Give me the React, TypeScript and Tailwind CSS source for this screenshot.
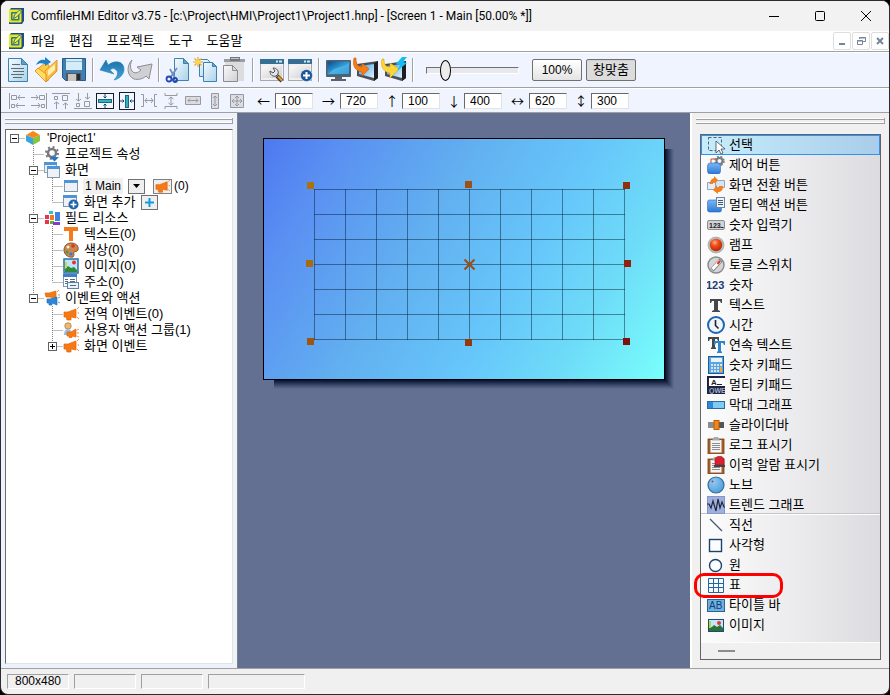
import type { ReactNode } from "react";

type IconProps = { size?: number; box?: number; children: ReactNode };

function Icon({ size = 18, box = 18, children }: IconProps) {
    return (
        <svg width={size} height={size} viewBox={`0 0 ${box} ${box}`} fill="none" className="shrink-0" aria-hidden="true">
            {children}
        </svg>
    );
}

function Gradients() {
    return (
        <svg width="0" height="0" className="absolute" aria-hidden="true">
            <defs>
                <linearGradient id="paper" x1="0" y1="0" x2="1" y2="1">
                    <stop offset="0" stopColor="#f4faff" />
                    <stop offset="1" stopColor="#a9d2ea" />
                </linearGradient>
                <linearGradient id="greyPaper" x1="0" y1="0" x2="1" y2="1">
                    <stop offset="0" stopColor="#fafafa" />
                    <stop offset="1" stopColor="#cfcfd2" />
                </linearGradient>
                <linearGradient id="blue" x1="0" y1="0" x2="0" y2="1">
                    <stop offset="0" stopColor="#7ab8f5" />
                    <stop offset="1" stopColor="#2b78d8" />
                </linearGradient>
                <linearGradient id="sky" x1="0" y1="0" x2="1" y2="1">
                    <stop offset="0" stopColor="#0c4a86" />
                    <stop offset="0.5" stopColor="#2f9ad8" />
                    <stop offset="1" stopColor="#0d5ea6" />
                </linearGradient>
                <linearGradient id="undo" x1="0" y1="0" x2="0" y2="1">
                    <stop offset="0" stopColor="#1c6fa8" />
                    <stop offset="1" stopColor="#41a6dc" />
                </linearGradient>
                <linearGradient id="gold" x1="0" y1="0" x2="1" y2="1">
                    <stop offset="0" stopColor="#ffe27a" />
                    <stop offset="1" stopColor="#f39a10" />
                </linearGradient>
                <linearGradient id="glass" x1="0" y1="0" x2="1" y2="1">
                    <stop offset="0" stopColor="#3c9be0" />
                    <stop offset="1" stopColor="#e4f4fd" />
                </linearGradient>
                <radialGradient id="red" cx="0.4" cy="0.3" r="0.7">
                    <stop offset="0" stopColor="#ffb080" />
                    <stop offset="0.4" stopColor="#f0501c" />
                    <stop offset="1" stopColor="#b82800" />
                </radialGradient>
                <radialGradient id="knob" cx="0.35" cy="0.3" r="0.8">
                    <stop offset="0" stopColor="#8cccf8" />
                    <stop offset="1" stopColor="#4e98d4" />
                </radialGradient>
            </defs>
        </svg>
    );
}

function AppLogo() {
    return (
        <Icon size={16} box={16}>
            <path d="M3 0h13v13l-2 3H1V3z" fill="#1d4f86" />
            <rect x="1" y="1.500" width="12.500" height="13" rx="1" fill="#e8e820" />
            <rect x="3" y="4" width="8.500" height="8.500" rx="1" fill="#2f7890" />
            <rect x="4.500" y="5.500" width="5.500" height="5.500" fill="#e8e820" />
            <path d="M5.500 10.500l1-3.500 5-5 2 2-5 5z" fill="#f6f040" stroke="#27638f" strokeWidth="0.900" />
        </Icon>
    );
}

/* Main toolbar drawings, 26 x 26 */

const windowFrame = (
    <>
        <rect x="1.500" y="3.500" width="23" height="20" fill="#f0f0f0" stroke="#a9a9a9" />
        <rect x="1" y="2" width="24" height="5" fill="#366f93" />
        <path d="M17 4.500h2M20 4.500h3" stroke="#cfe6f4" strokeWidth="2" />
        <path d="M3 9h20v12H3z" fill="url(#greyPaper)" />
    </>
);

const panelFrame = (
    <>
        <path d="M4 7l21-3v17l-4 3-17-5z" fill="#4a5058" />
        <path d="M6 9l15-2v14L6 17z" fill="url(#glass)" />
        <path d="M21 6l4-2v17l-4 3z" fill="#1c2024" />
    </>
);

const toolGroups: { label: string; art: ReactNode }[][] = [
    [
        {
            label: "새로 만들기",
            art: (
                <>
                    <path d="M3.500 1.500h13l6 6v17h-19z" fill="url(#paper)" stroke="#3f82ab" />
                    <path d="M16.500 1.500v6h6z" fill="#5f9fc8" stroke="#3f82ab" />
                    <path d="M7 7.500h8M6 11.500h13M8 14.500h11M6 17.500h13M8 20.500h9" stroke="#5f6a72" />
                </>
            ),
        },
        {
            label: "열기",
            art: (
                <>
                    <path d="M2 14l10-8 4 2-1 16z" fill="#ffc847" stroke="#e08a0a" strokeWidth="0.800" />
                    <path d="M12 14L24 3v11L13 25z" fill="url(#gold)" stroke="#e08a0a" strokeWidth="0.800" />
                    <path d="M2 14l11 11v-8L5 11z" fill="#ffdc68" stroke="#e08a0a" strokeWidth="0.800" />
                    <path d="M15 13l7-6v6l-7 6z" fill="#fff0b0" />
                    <path d="M3 8c2-5 6-6 9-5V0l6 5-6 4V7c-3-1-6-1-9 1z" fill="#1f82c4" />
                </>
            ),
        },
        {
            label: "저장",
            art: (
                <>
                    <path d="M1.500 1.500h23v22h-20l-3-3z" fill="#417fae" stroke="#285b84" />
                    <rect x="5" y="2" width="16" height="11" fill="#d5ecf9" />
                    <path d="M5 4.500h16" stroke="#8fc0df" />
                    <rect x="5" y="16" width="15" height="8" fill="#54585e" />
                    <rect x="7" y="17" width="8" height="7" fill="#c9c4c0" />
                    <rect x="16" y="17" width="3" height="6" fill="#26292e" />
                </>
            ),
        },
    ],
    [
        {
            label: "실행 취소",
            art: <path d="M1 13L7 3l2 5c8-6 16-3 16 4 0 6-5 10-10 11 4-4 5-9 1-11-2-1-4 0-5 1l4 4z" fill="url(#undo)" stroke="#2a7db2" strokeWidth="0.600" />,
        },
        {
            label: "다시 실행",
            art: <path d="M5 3C-1 9 0 19 7 22c4 1 9 0 12-3l3 3 3-15-15 3 4 3c-3 3-7 4-9 1-2-3-2-7 0-11z" fill="#cfd0d3" stroke="#8c8d91" strokeWidth="1" />,
        },
    ],
    [
        {
            label: "잘라내기",
            art: (
                <>
                    <path d="M9.500 1.500h9l5 5v17h-14z" fill="url(#paper)" stroke="#3f82ab" />
                    <path d="M18.500 1.500v5h5z" fill="#5f9fc8" stroke="#3f82ab" />
                    <path d="M5 12l5 9M12 11L5 21" stroke="#6f8fc0" strokeWidth="1.800" />
                    <circle cx="4" cy="22" r="2.500" stroke="#2447b4" strokeWidth="1.800" />
                    <circle cx="10" cy="23" r="2" stroke="#2447b4" strokeWidth="1.800" />
                </>
            ),
        },
        {
            label: "복사",
            art: (
                <>
                    <path d="M6.500 2.500h8l4 4v13h-12z" fill="url(#paper)" stroke="#3f82ab" />
                    <path d="M10.500 5.500h9l4 4v15h-13z" fill="url(#paper)" stroke="#3f82ab" />
                    <path d="M19.500 5.500v4h4z" fill="#5f9fc8" stroke="#3f82ab" />
                    <path d="M5 0v10M0 5h10M1.500 1.500l7 7M8.500 1.500l-7 7" stroke="#e8a81c" strokeWidth="1.200" />
                    <circle cx="5" cy="5" r="2.200" fill="#ffd84a" />
                </>
            ),
        },
        {
            label: "붙여넣기",
            art: (
                <>
                    <path d="M4 2h19v22H4z" fill="#dcdcdf" />
                    <path d="M3 2h21v3H3z" fill="#9b9da0" />
                    <path d="M9 0h10v4H9z" fill="#75777a" />
                    <path d="M10 1.500h8" stroke="#c4c5c7" />
                    <path d="M2.500 8.500h9l5 5v11h-14z" fill="url(#greyPaper)" stroke="#8b8c8f" />
                    <path d="M11.500 8.500v5h5z" fill="#dadada" stroke="#8b8c8f" />
                </>
            ),
        },
    ],
    [
        {
            label: "화면 설정",
            art: (
                <>
                    {windowFrame}
                    <path d="M18 19l5 5" stroke="#4a3a2a" strokeWidth="4" />
                    <path d="M19 19.500l4 4" stroke="#e59a2c" strokeWidth="2.200" />
                    <path d="M11 14c0 4 3 6 6 5l2-2c1-3-1-6-5-6l2 3-2 2z" fill="#e5e5ea" stroke="#50525c" />
                </>
            ),
        },
        {
            label: "화면 추가",
            art: (
                <>
                    {windowFrame}
                    <circle cx="19.500" cy="18.500" r="6" fill="#1a5796" stroke="#fff" strokeWidth="0.500" />
                    <path d="M19.500 15v7M16 18.500h7" stroke="#fff" strokeWidth="2" />
                </>
            ),
        },
    ],
    [
        {
            label: "시뮬레이션",
            art: (
                <>
                    <rect x="1" y="3" width="25" height="17" rx="1" fill="#51606c" />
                    <rect x="2.500" y="4.500" width="22" height="13" fill="url(#sky)" />
                    <path d="M4 17c4-7 10-5 20-11v11z" fill="#5cc4ee" opacity="0.600" />
                    <path d="M10 20h7v2h4v2H6v-2h4z" fill="#5a646c" />
                </>
            ),
        },
        {
            label: "다운로드",
            art: (
                <>
                    {panelFrame}
                    <path d="M1 1c-2 9 2 13 8 14v4l7-7-7-6v4C5 10 3 7 3 1z" fill="#f57d14" stroke="#c85c04" strokeWidth="0.600" />
                </>
            ),
        },
        {
            label: "빠른 다운로드",
            art: (
                <>
                    {panelFrame}
                    <path d="M1 2c-2 8 2 13 8 14v5l9-9-9-6v4C5 10 3 8 3 2z" fill="#ffd638" stroke="#dba712" strokeWidth="0.600" />
                    <path d="M21 0l-6 7 4 1-3 6 10-8-4-1 4-5z" fill="#12bff0" />
                </>
            ),
        },
    ],
];

/* Alignment toolbar drawings, 18 x 18 */

const alignTools: { label: string; art: ReactNode }[] = [
    {
        label: "왼쪽 맞춤",
        art: <path d="M1.500 1v16M3.500 3.500h5v4h-5zM17 5.500h-7M12 3l-2 2.500L12 8M17 13.500H8M10 11l-2 2.500 2 2.500M3.500 12.500h3v3h-3z" />,
    },
    {
        label: "오른쪽 맞춤",
        art: <path d="M16.500 1v16M9.500 3.500h5v4h-5zM1 5.500h7M6 3l2 2.500L6 8M1 13.500h9M8 11l2 2.500L8 16M11.500 12.500h3v3h-3z" />,
    },
    {
        label: "위쪽 맞춤",
        art: <path d="M0 1.500h18M2.500 4.500h3v3h-3zM10.500 3.500h5v5h-5zM4.500 17v-7M2 12l2.500-2L7 12M13.500 17v-6M11 13l2.500-2 2.500 2" />,
    },
    {
        label: "아래쪽 맞춤",
        art: <path d="M0 16.500h18M2.500 11.500h3v3h-3zM10.500 9.500h5v5h-5zM4.500 1v8M2 7l2.500 2L7 7M13.500 1v6M11 5l2.500 2L16 5" />,
    },
    {
        label: "세로 가운데",
        art: (
            <>
                <rect x="0.500" y="1.500" width="17" height="15" fill="#f4f7ff" stroke="#181c28" />
                <rect x="2.500" y="7.500" width="13" height="3" fill="#35b2bd" stroke="#176b80" />
                <path d="M9 2v4M9 16v-4M7.500 4.500L9 6l1.500-1.500M7.500 13.500L9 12l1.500 1.500" stroke="#16457c" />
            </>
        ),
    },
    {
        label: "가로 가운데",
        art: (
            <>
                <rect x="1.500" y="0.500" width="15" height="17" fill="#f4f7ff" stroke="#181c28" />
                <rect x="7.500" y="3.500" width="3" height="12" fill="#35b2bd" stroke="#176b80" />
                <path d="M2 9h4M16 9h-4M4.500 7.500L6 9l-1.500 1.500M13.500 7.500L12 9l1.500 1.500" stroke="#16457c" />
            </>
        ),
    },
    {
        label: "가로 간격",
        art: <path d="M1 2.500h2.500v12H1M17 2.500h-2.500v12H17M5 8.500h8M7 6L5 8.500 7 11M11 6l2 2.500-2 2.500" />,
    },
    {
        label: "세로 간격",
        art: <path d="M3 1v2.500h12V1M3 17v-2.500h12V17M9 5v8M6.500 7L9 5l2.500 2M6.500 11L9 13l2.500-2" />,
    },
    {
        label: "너비 맞춤",
        art: <path d="M1.500 4.500h15v8h-15zM4 8.500h10M6 6.500l-2 2 2 2M12 6.500l2 2-2 2" fill="#dcdde2" />,
    },
    {
        label: "높이 맞춤",
        art: <path d="M5.500 1.500h7v15h-7zM9 4v10M7 6l2-2 2 2M7 12l2 2 2-2" fill="#dcdde2" />,
    },
    {
        label: "크기 맞춤",
        art: <path d="M2.500 2.500h13v13h-13zM4 9h10M9 4v10M6 7L4 9l2 2M12 7l2 2-2 2M7 6l2-2 2 2M7 12l2 2 2-2" fill="#dcdde2" />,
    },
];

const coords = [
    { arrow: "←", label: "왼쪽", value: "100", wide: true },
    { arrow: "→", label: "오른쪽", value: "720", wide: true },
    { arrow: "↑", label: "위", value: "100", wide: false },
    { arrow: "↓", label: "아래", value: "400", wide: false },
    { arrow: "↔", label: "너비", value: "620", wide: true },
    { arrow: "↕", label: "높이", value: "300", wide: false },
];

/* Project tree */

const horn = <path d="M1 6l4 0 8-3v9l-5-1v3H4l-1-3H1zM14 3l2-2M14.500 7H16M14 11l2 2" fill="#f47a16" stroke="#e8640a" strokeWidth="0.700" />;

const treeArt: Record<string, ReactNode> = {
    cube: (
        <>
            <path d="M1 5l7 3v7l-7-4z" fill="#35a6e4" />
            <path d="M15 5L8 8v7l7-4z" fill="#8ac43c" />
            <path d="M8 1l7 4-7 3-7-3z" fill="#f48a1e" />
        </>
    ),
    gear: (
        <>
            <circle cx="8" cy="7" r="4" stroke="#77797d" strokeWidth="2.500" />
            <circle cx="8" cy="7" r="6" stroke="#77797d" strokeWidth="2" strokeDasharray="2 2.700" />
            <path d="M6 11h9l-4.500 4.500z" fill="#1f78d0" />
        </>
    ),
    windows: (
        <>
            <rect x="0.500" y="0.500" width="12" height="10" fill="#e8eef6" stroke="#8ea6c0" />
            <path d="M0 0h13v3H0z" fill="#4f93d8" />
            <rect x="3.500" y="4.500" width="12" height="11" fill="#eef2f8" stroke="#8094aa" />
            <path d="M3 4h13v3H3z" fill="#4f93d8" />
        </>
    ),
    window: (
        <>
            <rect x="1.500" y="2.500" width="13" height="11" fill="#eef2f8" stroke="#8094aa" />
            <path d="M1 2h14v3H1z" fill="#4f93d8" />
        </>
    ),
    windowAdd: (
        <>
            <rect x="0.500" y="1.500" width="13" height="11" fill="#eef2f8" stroke="#8094aa" />
            <path d="M0 1h14v3H0z" fill="#4f93d8" />
            <circle cx="10.500" cy="10.500" r="5" fill="#1f64a8" />
            <path d="M10.500 7.500v6M7.500 10.500h6" stroke="#fff" strokeWidth="1.600" />
        </>
    ),
    blocks: (
        <>
            <path d="M1 5h4v4H1z" fill="#e8344c" />
            <path d="M1 10h4v4H1z" fill="#e8344c" />
            <path d="M5 1h4v3H5z" fill="#2fc0d8" />
            <path d="M6 5h4v5H6z" fill="#f07828" />
            <path d="M11 2h5v9h-5z" fill="#3a86e0" />
            <path d="M6 11h4v3H6z" fill="#58b838" />
            <path d="M9 12h7v3H9z" fill="#8a3cc0" />
        </>
    ),
    letter: <path d="M1 1h14v4h-5v10H6V5H1z" fill="#f47a1c" />,
    palette: (
        <>
            <path d="M8 1c5 0 8 3 7 7-1 2-3 1-4 2s1 3-1 5c-4 1-9-2-9-7 0-4 3-7 7-7z" fill="#c88750" stroke="#8c5426" />
            <circle cx="5" cy="5" r="1.500" fill="#fff0d0" />
            <circle cx="10" cy="4" r="1.800" fill="#e03020" />
            <circle cx="4" cy="10" r="1.500" fill="#38a040" />
            <circle cx="8" cy="12" r="1.600" fill="#3078d8" />
        </>
    ),
    picture: (
        <>
            <rect x="1" y="1" width="14" height="14" fill="#bfe4fb" stroke="#2e6fa6" strokeWidth="1.500" />
            <path d="M2 14v-3l3-3 3 2 3-1 3 3v2z" fill="#2f8a38" />
            <path d="M2 4h2v6H2z" fill="#c4dc48" />
            <circle cx="11" cy="4.500" r="2" fill="#e83030" />
        </>
    ),
    address: (
        <>
            <rect x="0.500" y="0.500" width="13" height="12" fill="#fff" stroke="#7c98bc" />
            <path d="M0 0h14v3H0z" fill="#3f7fc8" />
            <path d="M2 5.500h3M7 5.500h5M2 7.500h3M7 7.500h5M2 9.500h3" stroke="#5a6a80" />
            <rect x="4.500" y="8.500" width="11" height="6" fill="#e8f0f8" stroke="#6080a8" />
            <path d="M7 11.500h6" stroke="#5a6a80" />
        </>
    ),
    horns: (
        <>
            <path d="M1 3l4 0 7-2v7l-7-1H2zM13 2l2-2M14 5h2" fill="#f47a16" stroke="#e8640a" strokeWidth="0.700" />
            <path d="M3 9l3 0 7-2v8l-5-2v2H5v-2H3zM14 8l2-1M14 12l2 1" fill="#2f86d4" stroke="#2272bc" strokeWidth="0.700" />
        </>
    ),
    horn,
    user: (
        <>
            <circle cx="5" cy="4" r="3.200" fill="#f0b878" stroke="#b07a40" strokeWidth="0.800" />
            <path d="M1 13c0-4 2-6 4-6s4 2 4 6z" fill="#8cc0ec" />
            <path d="M4 10l4 0 5-3v8l-4-1v1.500H6V14H4zM14 8l2-1M14 11h2M14 14l2 1" fill="#f47a16" stroke="#e8640a" strokeWidth="0.700" />
        </>
    ),
};

type Branch = "line" | "tee" | "end" | "blank" | "open" | "openEnd" | "openRoot" | "closedEnd";

const treeRows: { branches: Branch[]; art: string; text: string; extra?: "main" | "add" }[] = [
    { branches: ["openRoot"], art: "cube", text: "'Project1'" },
    { branches: ["blank", "tee"], art: "gear", text: "프로젝트 속성" },
    { branches: ["blank", "open"], art: "windows", text: "화면" },
    { branches: ["blank", "line", "tee"], art: "window", text: "1 Main", extra: "main" },
    { branches: ["blank", "line", "end"], art: "windowAdd", text: "화면 추가", extra: "add" },
    { branches: ["blank", "open"], art: "blocks", text: "필드 리소스" },
    { branches: ["blank", "line", "tee"], art: "letter", text: "텍스트(0)" },
    { branches: ["blank", "line", "tee"], art: "palette", text: "색상(0)" },
    { branches: ["blank", "line", "tee"], art: "picture", text: "이미지(0)" },
    { branches: ["blank", "line", "end"], art: "address", text: "주소(0)" },
    { branches: ["blank", "openEnd"], art: "horns", text: "이벤트와 액션" },
    { branches: ["blank", "blank", "tee"], art: "horn", text: "전역 이벤트(0)" },
    { branches: ["blank", "blank", "tee"], art: "user", text: "사용자 액션 그룹(1)" },
    { branches: ["blank", "blank", "closedEnd"], art: "horn", text: "화면 이벤트" },
];

function BranchCell({ kind }: { kind: Branch }) {
    const down = kind === "line" || kind === "tee" || kind === "open";
    const up = down || kind === "end" || kind === "openEnd" || kind === "closedEnd";
    const across = kind !== "line" && kind !== "blank";
    const toggle = kind.startsWith("open") || kind === "closedEnd";
    return (
        <svg width="19" height="16" viewBox="0 0 19 16" fill="none" className="shrink-0" aria-hidden="true">
            <g stroke="#808080" strokeDasharray="1 1">
                {up && <path d="M8.500 0v8" />}
                {down && <path d="M8.500 8v8" />}
                {across && <path d="M8.500 8.500H19" />}
            </g>
            {toggle && (
                <>
                    <rect x="4.500" y="4.500" width="8" height="8" fill="#fff" stroke="#606060" />
                    <path d={kind === "closedEnd" ? "M6 8.500h5M8.500 6v5" : "M6 8.500h5"} stroke="#000" />
                </>
            )}
        </svg>
    );
}

function ProjectTree() {
    return (
        <ul className="min-h-0 flex-1 overflow-hidden border border-[#e3e3e3] border-t-[#696969] border-l-[#696969] bg-white">
            {treeRows.map((row) => (
                <li key={row.text} className="flex h-4 items-center">
                    {row.branches.map((kind, index) => (
                        <BranchCell key={index} kind={kind} />
                    ))}
                    <Icon size={16} box={16}>{treeArt[row.art]}</Icon>
                    <span
                        className={
                            row.extra === "main"
                                ? "ml-1 bg-[#f0f0f0] px-[2px] text-xs leading-4"
                                : row.branches[0] === "openRoot"
                                    ? "ml-[6px] text-xs leading-4"
                                    : "ml-[5px] leading-4"
                        }
                    >
                        {row.text}
                    </span>
                    {row.extra === "main" && (
                        <>
                            <button aria-label="화면 메뉴" className="ml-[5px] flex h-[15px] w-[17px] items-center justify-center border border-[#707070] bg-[#efefef]">
                                <svg width="7" height="4" viewBox="0 0 7 4" aria-hidden="true"><path d="M0 0h7L3.500 4z" fill="#000" /></svg>
                            </button>
                            <button aria-label="화면 이벤트" className="mr-[2px] ml-2 flex h-[15px] w-[19px] items-center justify-center border border-[#808080] bg-[#efefef]">
                                <Icon size={15} box={16}>{horn}</Icon>
                            </button>
                            <span className="text-xs">(0)</span>
                        </>
                    )}
                    {row.extra === "add" && (
                        <button aria-label="추가" className="ml-[6px] flex h-[15px] w-[17px] items-center justify-center border border-[#707070] bg-[#efefef]">
                            <svg width="9" height="9" viewBox="0 0 9 9" aria-hidden="true"><path d="M4.500 0v9M0 4.500h9" stroke="#109ae0" strokeWidth="2" /></svg>
                        </button>
                    )}
                </li>
            ))}
        </ul>
    );
}

/* Object palette */

const clipboard = (
    <>
        <rect x="1" y="3" width="16" height="15" fill="#a45f2c" stroke="#70401c" strokeWidth="0.800" />
        <rect x="3.500" y="4" width="11" height="12.500" fill="#f4f4f4" />
        <path d="M5 7.500h8M5 9.500h8M5 11.500h8M5 13.500h8" stroke="#8a8d92" />
        <path d="M5 4.500h8L11 1H7z" fill="#a8abae" />
    </>
);

const glyph = "font-['Liberation_Sans',sans-serif] font-bold";

const objects: { text: string; art: ReactNode }[] = [
    {
        text: "선택",
        art: (
            <>
                <rect x="1.500" y="1.500" width="13" height="13" stroke="#54606c" strokeDasharray="3 2" />
                <path d="M9 5v12l3-3 2 4 2-1-2-4h4z" fill="#fff" stroke="#404850" strokeWidth="0.800" />
            </>
        ),
    },
    {
        text: "제어 버튼",
        art: (
            <>
                <path d="M4 7V3h5" stroke="#e83828" />
                <circle cx="12.500" cy="5" r="3" stroke="#777a80" strokeWidth="2" />
                <circle cx="12.500" cy="5" r="4.500" stroke="#777a80" strokeWidth="1.400" strokeDasharray="2 1.600" />
                <rect x="0.500" y="7" width="13" height="11" rx="3" fill="url(#blue)" stroke="#2a6ab8" strokeWidth="0.600" />
            </>
        ),
    },
    {
        text: "화면 전환 버튼",
        art: (
            <>
                <path d="M0.500 6.500h9v7h-9z" fill="#e8eef4" stroke="#8ea6bc" />
                <path d="M8.500 4.500h9v7h-9z" fill="#d4e4f2" stroke="#8ea6bc" />
                <path d="M3 7c0-3 2-4 4-5V0l4 4-3 4V6C6 6 6 7 6 8H2z" fill="#f4801c" />
                <path d="M16 11c0 3-2 5-5 5v2l-5-4 4-5v3c2 0 2-1 2-2h4z" fill="#f4801c" />
            </>
        ),
    },
    {
        text: "멀티 액션 버튼",
        art: (
            <>
                <rect x="0.500" y="4" width="14" height="12" rx="2" fill="url(#blue)" stroke="#2a6ab8" strokeWidth="0.600" />
                <rect x="9.500" y="1.500" width="8" height="10" fill="#eef4fa" stroke="#6a86a4" />
                <path d="M11 4.500h5M11 6.500h5M11 8.500h5" stroke="#405870" />
            </>
        ),
    },
    {
        text: "숫자 입력기",
        art: (
            <>
                <rect x="0.500" y="4.500" width="17" height="9" rx="1.500" fill="#d0d2d4" stroke="#8b8d90" />
                <text x="2" y="12" fontSize="7" fill="#222" className={glyph}>123</text>
                <path d="M13.500 11.500h3" stroke="#222" />
            </>
        ),
    },
    {
        text: "램프",
        art: (
            <>
                <circle cx="9" cy="9" r="8" fill="#b8babc" stroke="#9a9c9e" strokeWidth="0.600" />
                <circle cx="9" cy="9" r="6.200" fill="url(#red)" />
            </>
        ),
    },
    {
        text: "토글 스위치",
        art: (
            <>
                <circle cx="9" cy="9" r="8" fill="#d4d5d6" stroke="#8a8c8e" strokeWidth="1.500" />
                <path d="M5 14L14 4" stroke="#8a8c8e" strokeWidth="4.500" />
                <path d="M5.500 13L13 5" stroke="#fff" strokeWidth="3" />
                <path d="M10.500 8L13 5" stroke="#e03020" strokeWidth="2" />
            </>
        ),
    },
    { text: "숫자", art: <text x="-1" y="13" fontSize="11" fill="#223c72" className={glyph}>123</text> },
    { text: "텍스트", art: <path d="M3 3h12v4h-1l-1-2h-2v9l2 1v1H5v-1l2-1V5H5L4 7H3z" fill="#454748" /> },
    {
        text: "시간",
        art: (
            <>
                <circle cx="9" cy="9" r="8" fill="#eef4fa" stroke="#1c66b4" strokeWidth="2" />
                <path d="M8.500 4v5.500l3 3" stroke="#222" strokeWidth="1.600" />
            </>
        ),
    },
    {
        text: "연속 텍스트",
        art: (
            <>
                <path d="M1 1h11v4h-1l-1-2H8v8l1 1v1H4v-1l1-1V3H3L2 5H1z" fill="#454748" />
                <path d="M7 5h11v4h-1l-1-2h-2v8l1 1v1h-5v-1l1-1V7H9L8 9H7z" fill="#2b86d0" />
            </>
        ),
    },
    {
        text: "숫자 키패드",
        art: (
            <>
                <rect x="1.500" y="0.500" width="15" height="17" fill="#5ba6e0" stroke="#1e5c98" />
                <rect x="4" y="2" width="11" height="4" fill="#e8f4fc" />
                <path d="M4 9h2m1 0h2m1 0h2M4 12h2m1 0h2m1 0h2M4 15h2m1 0h2m1 0h2" stroke="#d4e4f0" strokeWidth="2" />
                <path d="M13 11h2v5h-2z" fill="#f4a838" />
                <path d="M13 8h2v2h-2z" fill="#d4e4f0" />
            </>
        ),
    },
    {
        text: "멀티 키패드",
        art: (
            <>
                <rect x="0" y="0" width="18" height="18" fill="#1d2340" />
                <rect x="2" y="2" width="16" height="8" fill="#fff" />
                <text x="4" y="9" fontSize="8" fill="#222" className={glyph}>A</text>
                <path d="M10 8.500h5" stroke="#222" />
                <text x="2" y="17" fontSize="7" fill="#a8b0d0" className={glyph}>QWE</text>
            </>
        ),
    },
    {
        text: "막대 그래프",
        art: (
            <>
                <rect x="0.500" y="5.500" width="17" height="7" fill="#7ecbf4" stroke="#2a6b9c" />
                <path d="M1 6h5v6H1z" fill="#2f88dc" />
            </>
        ),
    },
    {
        text: "슬라이더바",
        art: (
            <>
                <path d="M1 6h15v6H1z" fill="#8a8e92" />
                <path d="M12 6h5v6h-5z" fill="#50565c" />
                <rect x="7" y="4.500" width="5" height="9" fill="#f48418" stroke="#b85c08" />
            </>
        ),
    },
    { text: "로그 표시기", art: clipboard },
    {
        text: "이력 알람 표시기",
        art: (
            <>
                {clipboard}
                <path d="M8 9V4c0-5 9-5 9 0v5z" fill="#dc2030" stroke="#98101c" strokeWidth="0.600" />
                <path d="M7 9h11v2H7z" fill="#40444a" />
            </>
        ),
    },
    {
        text: "노브",
        art: (
            <>
                <circle cx="9" cy="9" r="8" fill="url(#knob)" stroke="#356c9c" strokeWidth="1.200" />
                <circle cx="5.500" cy="5.500" r="1" fill="#c83030" />
            </>
        ),
    },
    {
        text: "트렌드 그래프",
        art: (
            <>
                <rect x="0.500" y="0.500" width="17" height="17" fill="#9fb0de" stroke="#8496c8" />
                <path d="M0 8h2l2 4 2-7 3 10 2-12 2 9 2-6 2 5h1" stroke="#20283c" strokeWidth="1.200" />
            </>
        ),
    },
];

const shapes: { text: string; marked?: boolean; art: ReactNode }[] = [
    { text: "직선", art: <path d="M3 3l12 12" stroke="#44586e" strokeWidth="1.300" /> },
    { text: "사각형", art: <rect x="2.500" y="3.500" width="12" height="12" fill="#fafcff" stroke="#1f416e" strokeWidth="1.400" /> },
    { text: "원", art: <circle cx="8.500" cy="9.500" r="6" fill="#fafcff" stroke="#1f416e" strokeWidth="1.400" /> },
    {
        text: "표",
        marked: true,
        art: <path d="M1.500 2.500h15v14h-15zM6.500 2.500v14M11.500 2.500v14M1.500 7.500h15M1.500 11.500h15" fill="#f4faff" stroke="#28649c" />,
    },
    {
        text: "타이틀 바",
        art: (
            <>
                <rect x="0.500" y="3.500" width="17" height="12" fill="#6fb0e4" stroke="#2c6498" />
                <text x="2" y="13" fontSize="10" fill="#143c6c" className="font-['Liberation_Sans',sans-serif]">AB</text>
            </>
        ),
    },
    {
        text: "이미지",
        art: (
            <>
                <rect x="1.500" y="3.500" width="15" height="12" fill="#c4e6fb" stroke="#1f4c7c" />
                <path d="M2 15v-3l3-1 2-2 3 2 3-2 3 3v3z" fill="#2c7434" />
                <path d="M2 5h2v7H2z" fill="#b8d838" />
                <circle cx="12" cy="7" r="2" fill="#e83838" />
            </>
        ),
    },
];

function PaletteButton({ text, art, active, marked }: { text: string; art: ReactNode; active?: boolean; marked?: boolean }) {
    return (
        <li className="relative">
            <button
                className={
                    active
                        ? "flex h-5 w-full items-center gap-1 border border-[#3390ee] bg-linear-to-r from-[#c6edfc] to-[#a9cdea] pl-[5px]"
                        : "flex h-5 w-full items-center gap-1 pl-[6px]"
                }
            >
                <Icon>{art}</Icon>
                <span>{text}</span>
            </button>
            {marked && <span className="pointer-events-none absolute -top-[2px] -left-[7px] h-[25px] w-[89px] rounded-[10px] border-[3px] border-[#ff0000]" />}
        </li>
    );
}

function Grip() {
    return (
        <div className="flex h-[6px] flex-col justify-between border-r border-[#a0a0a0]">
            <span className="h-[2px] border-b border-[#a0a0a0] bg-white" />
            <span className="h-[2px] border-b border-[#a0a0a0] bg-white" />
        </div>
    );
}

/* Drawing surface with the selected table */

const handles = [
    { x: 44, y: 44, color: "#a87410" },
    { x: 202, y: 43, color: "#a05010" },
    { x: 360, y: 44, color: "#90300a" },
    { x: 43, y: 122, color: "#a86c10" },
    { x: 361, y: 122, color: "#902010" },
    { x: 44, y: 200, color: "#a05410" },
    { x: 202, y: 201, color: "#983808" },
    { x: 360, y: 200, color: "#80100a" },
];

const shadowSteps = ["#5d6a8c", "#546183", "#4a5778", "#3f4c6d", "#344162", "#293657", "#1e2b4b", "#13203f", "#0a1632"];

function ScreenCanvas() {
    return (
        <svg width="412" height="252" viewBox="0 0 412 252" role="img" aria-label="Screen 1" className="shrink-0">
            <defs>
                <linearGradient id="screenFill" gradientUnits="userSpaceOnUse" x1="0" y1="0" x2="401" y2="241">
                    <stop offset="0" stopColor="#4e78f0" />
                    <stop offset="0.150" stopColor="#5a90f2" />
                    <stop offset="0.400" stopColor="#62b0f0" />
                    <stop offset="0.620" stopColor="#66c6fa" />
                    <stop offset="0.800" stopColor="#6edcf8" />
                    <stop offset="1" stopColor="#78fffc" />
                </linearGradient>
            </defs>
            {shadowSteps.map((color, index) => (
                <rect key={color} x="11" y="11" width={400 - index} height={240 - index} fill={color} />
            ))}
            <rect x="0.500" y="0.500" width="401" height="241" fill="url(#screenFill)" stroke="#000" />
            <g stroke="#001428" strokeOpacity="0.450">
                {Array.from({ length: 11 }, (_, i) => (
                    <path key={i} d={`M${51.5 + i * 31} 51v151`} />
                ))}
                {Array.from({ length: 7 }, (_, i) => (
                    <path key={i} d={`M51 ${51.5 + i * 25}h311`} />
                ))}
            </g>
            {handles.map((handle) => (
                <rect key={`${handle.x}-${handle.y}`} x={handle.x} y={handle.y} width="7" height="7" fill={handle.color} />
            ))}
            <path d="M201.500 121.500l10 10M211.500 121.500l-10 10" stroke="#a04a10" strokeWidth="2" />
        </svg>
    );
}

const inset = "border border-white border-t-[#a0a0a0] border-l-[#a0a0a0]";

export default function App() {
    return (
        <div className="h-screen bg-black font-['Liberation_Sans','Noto_Sans_CJK_KR',sans-serif] text-[13px] text-black">
            <Gradients />
            <div className="flex h-full flex-col overflow-hidden rounded-lg border border-[#2c2c30] bg-[#f0f0f0]">
                {/* Title bar */}
                <header className="flex h-[30px] shrink-0 items-center bg-[#f2f2f2] pl-[7px]">
                    <AppLogo />
                    <h1 className="ml-[7px] flex-1 truncate font-['Roboto',sans-serif] text-xs">
                        ComfileHMI Editor v3.75 - [c:\Project\HMI\Project1\Project1.hnp] - [Screen 1 - Main [50.00% *]]
                    </h1>
                    <div className="flex">
                        <button aria-label="최소화" className="flex h-[30px] w-[46px] items-center justify-center">
                            <Icon size={12} box={12}><path d="M1 6.500h10" stroke="#000" /></Icon>
                        </button>
                        <button aria-label="최대화" className="flex h-[30px] w-[46px] items-center justify-center">
                            <Icon size={12} box={12}><rect x="1.500" y="1.500" width="9" height="9" rx="1" stroke="#000" /></Icon>
                        </button>
                        <button aria-label="닫기" className="flex h-[30px] w-[46px] items-center justify-center">
                            <Icon size={12} box={12}><path d="M1 1l10 10M11 1L1 11" stroke="#000" /></Icon>
                        </button>
                    </div>
                </header>

                {/* Menu bar */}
                <div className="flex h-[21px] shrink-0 items-center justify-between border-b border-[#a0a0a0] bg-white pl-[7px]">
                    <div className="flex items-center">
                        <AppLogo />
                        <nav className="flex">
                            {["파일", "편집", "프로젝트", "도구", "도움말"].map((item) => (
                                <button key={item} className="px-[7px] leading-4">{item}</button>
                            ))}
                        </nav>
                    </div>
                    <div className="flex gap-[1px]">
                        <button aria-label="문서 최소화" className="flex size-[18px] items-center justify-center rounded-xs border border-[#dedede]">
                            <Icon size={10} box={10}><path d="M2 8h6" stroke="#76869a" strokeWidth="2" /></Icon>
                        </button>
                        <button aria-label="문서 복원" className="flex size-[18px] items-center justify-center rounded-xs border border-[#dedede]">
                            <Icon size={10} box={10}><path d="M3.500 3V1.500h6v4H7M1.500 4.500h5v4h-5zM3 2h7M1 5h6" stroke="#76869a" /></Icon>
                        </button>
                        <button aria-label="문서 닫기" className="flex size-[18px] items-center justify-center rounded-xs border border-[#dedede]">
                            <Icon size={10} box={10}><path d="M2 2l6 6M8 2L2 8" stroke="#76869a" strokeWidth="2" /></Icon>
                        </button>
                    </div>
                </div>

                {/* Main toolbar */}
                <div className="flex h-9 shrink-0 items-center border-y border-t-white border-b-[#a0a0a0] bg-[#f0f4ff] pl-[3px]">
                    {toolGroups.map((group) => (
                        <div key={group[0].label} className="flex items-center">
                            {group.map((tool) => (
                                <button key={tool.label} aria-label={tool.label} className="flex w-7 justify-center">
                                    <Icon size={26} box={26}>{tool.art}</Icon>
                                </button>
                            ))}
                            <span className="mx-1 h-6 w-[2px] border-r border-white bg-[#a0a0a0]" />
                        </div>
                    ))}
                    <input
                        type="range"
                        aria-label="확대 비율"
                        defaultValue={16}
                        className="ml-2 h-5 w-[93px] appearance-none bg-transparent [&::-webkit-slider-runnable-track]:h-[7px] [&::-webkit-slider-runnable-track]:border [&::-webkit-slider-runnable-track]:border-white [&::-webkit-slider-runnable-track]:border-t-[#707070] [&::-webkit-slider-runnable-track]:border-l-[#707070] [&::-webkit-slider-runnable-track]:bg-[#e6e8ee] [&::-webkit-slider-thumb]:-mt-[8px] [&::-webkit-slider-thumb]:h-[21px] [&::-webkit-slider-thumb]:w-[11px] [&::-webkit-slider-thumb]:appearance-none [&::-webkit-slider-thumb]:rounded-[50%] [&::-webkit-slider-thumb]:border [&::-webkit-slider-thumb]:border-black [&::-webkit-slider-thumb]:bg-[#ececec]"
                    />
                    <button className="ml-[13px] h-[22px] w-[50px] rounded-xs border border-[#707070] bg-linear-to-b from-white to-[#e4e4e4] text-xs">100%</button>
                    <button className="ml-1 h-[22px] w-[50px] rounded-xs border border-[#707070] bg-[#dcdcdc] text-[13px] leading-4 inset-shadow-xs">창맞춤</button>
                </div>

                {/* Alignment toolbar */}
                <div className="flex h-[25px] shrink-0 items-center border-y border-t-white border-b-[#a0a0a0] bg-[#f0f4ff] pl-[5px]">
                    {alignTools.map((tool) => (
                        <button key={tool.label} aria-label={tool.label} className="flex w-[22px] shrink-0 justify-center">
                            <Icon><g stroke="#98999e">{tool.art}</g></Icon>
                        </button>
                    ))}
                    {coords.map((coord) => (
                        <label key={coord.label} className="flex shrink-0 items-center font-['Noto_Sans_CJK_KR',sans-serif] leading-4">
                            <span className={coord.wide ? "w-[27px] pl-1 text-center" : "w-6 pl-1 text-center"}>{coord.arrow}</span>
                            <input
                                aria-label={coord.label}
                                defaultValue={coord.value}
                                className="h-4 w-[38px] border border-[#e3e3e3] border-t-[#696969] border-l-[#696969] bg-white pl-[5px] font-['Liberation_Sans',sans-serif] text-xs"
                            />
                        </label>
                    ))}
                </div>

                {/* Work area */}
                <main className="flex min-h-0 flex-1">
                    <aside className="flex w-[237px] shrink-0 flex-col gap-[5px] border-r border-[#808080] bg-[#eef2fc] px-1 pt-[5px] pb-1">
                        <Grip />
                        <ProjectTree />
                    </aside>
                    <section className="min-w-0 flex-1 overflow-hidden bg-[#637092] pt-[25px] pl-[25px]">
                        <ScreenCanvas />
                    </section>
                    <aside className="flex w-[199px] shrink-0 flex-col border-l-2 border-white bg-[#f0f0f0] px-1 pt-[5px] pb-2">
                        <Grip />
                        <div className="mx-1 mt-[10px] flex min-h-0 flex-1 flex-col border border-[#646464]">
                            <ul className="bg-linear-to-r from-[#fcfcfc] to-[#dcdce0]">
                                {objects.map((item, index) => (
                                    <PaletteButton key={item.text} text={item.text} art={item.art} active={index === 0} />
                                ))}
                            </ul>
                            <ul className="flex-1 border-b border-[#fcfcfc] bg-linear-to-r from-[#fcfcfc] to-[#dcdce0] shadow-[0_-1px_0_#ffffff,0_-2px_0_#c4c4c4]">
                                {shapes.map((item) => (
                                    <PaletteButton key={item.text} text={item.text} art={item.art} marked={item.marked} />
                                ))}
                            </ul>
                            <div className="flex h-4 items-center pl-[17px]">
                                <span className="h-[2px] w-[17px] bg-[#8c8c8c]" />
                            </div>
                        </div>
                    </aside>
                </main>

                {/* Status bar */}
                <footer className="flex h-[26px] shrink-0 items-center gap-[5px] border-t border-[#a0a0a0] pl-[6px] text-xs">
                    <span className={`h-[15px] w-[62px] text-center leading-[13px] ${inset}`}>800x480</span>
                    <span className={`h-[15px] w-[62px] ${inset}`} />
                    <span className={`h-[15px] w-[62px] ${inset}`} />
                    <span className={`h-[15px] w-[97px] ${inset}`} />
                </footer>
            </div>
        </div>
    );
}
